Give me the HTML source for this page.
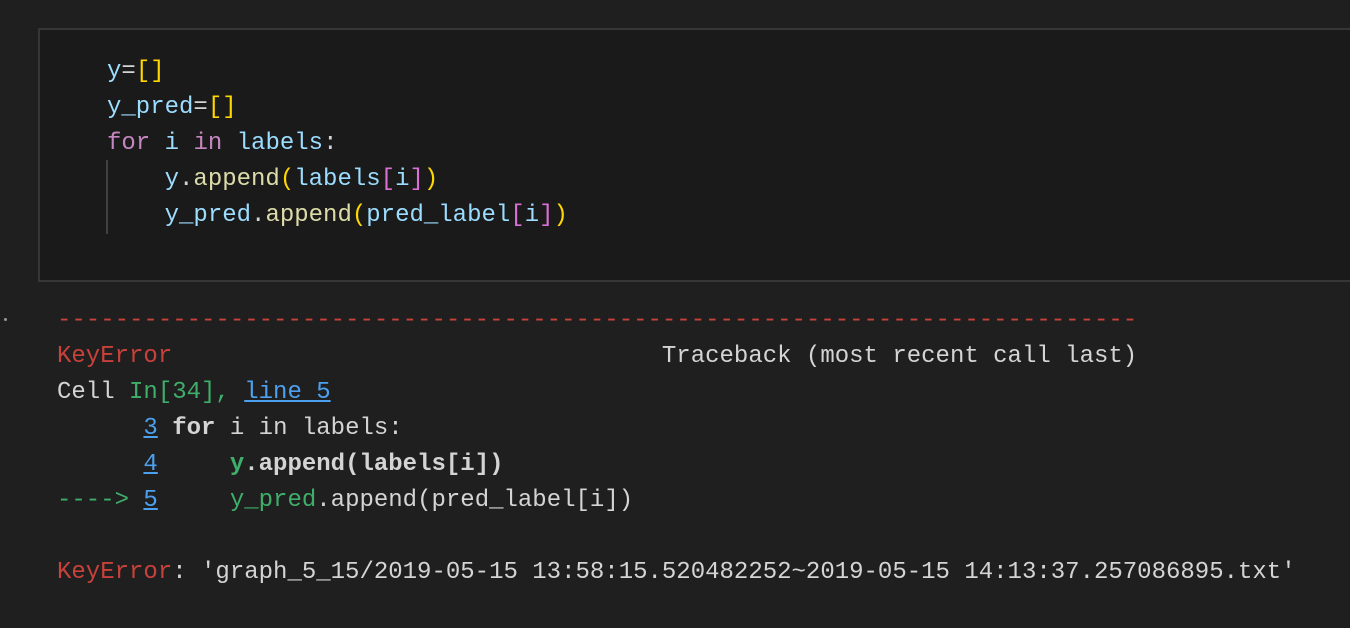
<!DOCTYPE html>
<html><head><style>
html,body{margin:0;padding:0;background:#1f1f1f;width:1350px;height:628px;overflow:hidden}
pre{margin:0;font-family:"Liberation Mono",monospace;font-size:24px;line-height:36px;white-space:pre}
.box{position:absolute;left:38px;top:28px;width:1320px;height:254px;background:#1a1a1a;border:2px solid #363636;box-sizing:border-box}
.code{position:absolute;left:107px;top:54px;color:#9cdcfe}
.g{position:absolute;width:2px;background:#404040;left:106px;top:160px;height:74px}
.kw{color:#c586c0}.fn{color:#dcdcaa}.y{color:#ffd700}.p{color:#da70d6}.w{color:#d4d4d4}
.out{position:absolute;left:57px;top:303px;color:#d4d4d4}
.r{color:#c8413b}.gr{color:#3fae6a}.b{color:#4da0ee;text-decoration:underline}
.bd{font-weight:bold}
.dot{position:absolute;left:4px;top:318px;width:3px;height:3px;border-radius:50%;background:#999}
</style></head><body>
<div class="box"></div>
<div class="g"></div>
<pre class="code">y<span class="w">=</span><span class="y">[]</span>
y_pred<span class="w">=</span><span class="y">[]</span>
<span class="kw">for</span> i <span class="kw">in</span> labels<span class="w">:</span>
    y<span class="w">.</span><span class="fn">append</span><span class="y">(</span>labels<span class="p">[</span>i<span class="p">]</span><span class="y">)</span>
    y_pred<span class="w">.</span><span class="fn">append</span><span class="y">(</span>pred_label<span class="p">[</span>i<span class="p">]</span><span class="y">)</span></pre>
<div class="dot"></div>
<pre class="out"><span class="r">---------------------------------------------------------------------------</span>
<span class="r">KeyError</span>                                  Traceback (most recent call last)
Cell <span class="gr">In[34], </span><span class="b">line 5</span>
      <span class="b">3</span> <span class="bd">for</span> i in labels:
      <span class="b">4</span>     <span class="bd"><span class="gr">y</span>.append(labels[i])</span>
<span class="gr">----&gt; </span><span class="b">5</span>     <span class="gr">y_pred</span>.append(pred_label[i])

<span class="r">KeyError</span>: 'graph_5_15/2019-05-15 13:58:15.520482252~2019-05-15 14:13:37.257086895.txt'</pre>
</body></html>
